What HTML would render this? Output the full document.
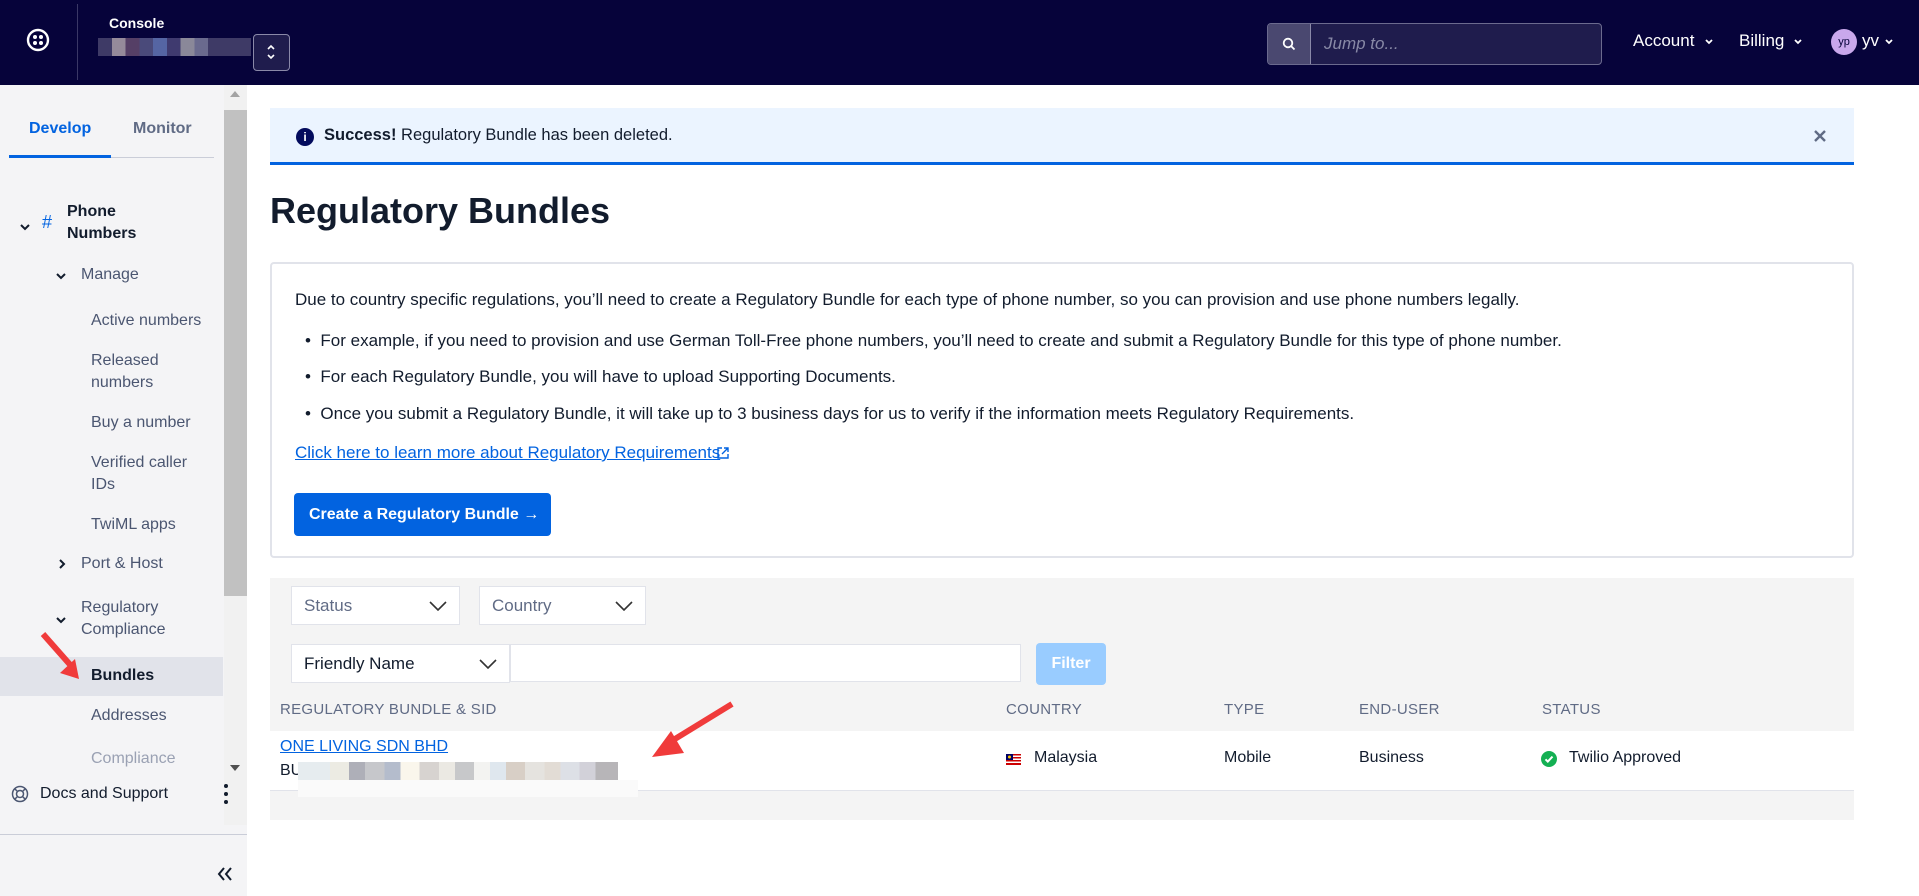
<!DOCTYPE html>
<html><head><meta charset="utf-8">
<style>
*{box-sizing:border-box;margin:0;padding:0}
body{width:1919px;height:896px;overflow:hidden;font-family:"Liberation Sans",sans-serif;background:#fff;position:relative;color:#121c2d}
.a{position:absolute;white-space:nowrap}
#hdr{position:absolute;left:0;top:0;width:1919px;height:85px;background:#06033a}
#side{position:absolute;left:0;top:85px;width:247px;height:811px;background:#f4f4f6}
.s{position:absolute;font-size:16px;color:#4b5671;line-height:22px}
.m{font-size:17px;color:#121c2d}
.th{position:absolute;top:701px;font-size:15px;color:#606b85;letter-spacing:.3px}
.td{position:absolute;top:749px;font-size:16px;color:#121c2d}
.sel{position:absolute;background:#fff;border:1px solid #e1e3ea;font-size:17px;color:#606b85;padding:0 12px;display:flex;align-items:center;justify-content:space-between}
</style></head><body>
<div id="hdr">
  <svg class="a" style="left:26px;top:28px" width="24" height="24" viewBox="0 0 24 24"><circle cx="12" cy="12" r="10" fill="none" stroke="#fff" stroke-width="2.4"/><circle cx="9" cy="9" r="2" fill="#fff"/><circle cx="15" cy="9" r="2" fill="#fff"/><circle cx="9" cy="15" r="2" fill="#fff"/><circle cx="15" cy="15" r="2" fill="#fff"/></svg>
  <div class="a" style="left:77px;top:4px;width:1px;height:76px;background:#3a3866"></div>
  <div class="a" style="left:109px;top:15px;font-size:14px;font-weight:bold;color:#fff">Console</div>
  <div class="a" style="left:98px;top:38px;width:153px;height:18px;background:linear-gradient(90deg,#3e3a66 0 9%,#958a9a 9% 18%,#553f66 18% 27%,#4a4a7a 27% 36%,#5565a3 36% 45%,#3f3a6f 45% 54%,#8a8899 54% 63%,#6a6a8e 63% 72%,#3e3a66 72%)"></div>
  <div class="a" style="left:253px;top:34px;width:37px;height:37px;border:1px solid #8a89a8;border-radius:4px;background:#1f1c4d"></div>
  <svg class="a" style="left:266px;top:43px" width="10" height="18" viewBox="0 0 10 18"><path d="M2 6l3-3 3 3M2 12l3 3 3-3" fill="none" stroke="#fff" stroke-width="1.6"/></svg>
  <div class="a" style="left:1267px;top:23px;width:335px;height:42px;border:1px solid #6b6a8e;border-radius:4px;background:#1f1c4d;overflow:hidden">
    <div class="a" style="left:0;top:0;width:43px;height:40px;background:#4a4870;border-right:1px solid #8a89a8"></div>
    <svg class="a" style="left:14px;top:13px" width="14" height="14" viewBox="0 0 14 14"><circle cx="6" cy="6" r="4.3" fill="none" stroke="#fff" stroke-width="1.8"/><path d="M9 9l3.5 3.5" stroke="#fff" stroke-width="1.8"/></svg>
    <div class="a" style="left:56px;top:10px;font-size:17px;font-style:italic;color:#8889a6">Jump to...</div>
  </div>
  <div class="a" style="left:1633px;top:31px;font-size:17px;color:#fff">Account</div>
  <svg class="a" style="left:1704px;top:38px" width="10" height="8" viewBox="0 0 10 8"><path d="M2 2l3 3 3-3" fill="none" stroke="#fff" stroke-width="1.8"/></svg>
  <div class="a" style="left:1739px;top:31px;font-size:17px;color:#fff">Billing</div>
  <svg class="a" style="left:1793px;top:38px" width="10" height="8" viewBox="0 0 10 8"><path d="M2 2l3 3 3-3" fill="none" stroke="#fff" stroke-width="1.8"/></svg>
  <div class="a" style="left:1831px;top:29px;width:26px;height:26px;border-radius:13px;background:#c9a8ec;color:#06033a;font-size:11px;text-align:center;line-height:26px">yp</div>
  <div class="a" style="left:1862px;top:31px;font-size:17px;color:#fff">yv</div>
  <svg class="a" style="left:1884px;top:38px" width="10" height="8" viewBox="0 0 10 8"><path d="M2 2l3 3 3-3" fill="none" stroke="#fff" stroke-width="1.8"/></svg>
</div>

<div id="side">
  <div class="a" style="left:224px;top:0;width:23px;height:740px;background:#f1f1f1"></div>
  <div class="a" style="left:224px;top:25px;width:23px;height:486px;background:#c1c1c1"></div>
  <div class="a" style="left:230px;top:6px;width:0;height:0;border-left:5px solid transparent;border-right:5px solid transparent;border-bottom:6px solid #a3a3a3"></div>
  <div class="a" style="left:230px;top:680px;width:0;height:0;border-left:5px solid transparent;border-right:5px solid transparent;border-top:6px solid #505050"></div>
  <div class="a" style="left:29px;top:35px;font-size:16px;font-weight:bold;color:#0263e0">Develop</div>
  <div class="a" style="left:133px;top:35px;font-size:16px;font-weight:bold;color:#606b85">Monitor</div>
  <div class="a" style="left:9px;top:72px;width:205px;height:1px;background:#cacdd8"></div>
  <div class="a" style="left:9px;top:70px;width:102px;height:3px;background:#0263e0"></div>
  <svg class="a" style="left:19px;top:137px" width="12" height="10" viewBox="0 0 12 10"><path d="M2 3l4 4 4-4" fill="none" stroke="#121c2d" stroke-width="2"/></svg>
  <div class="a" style="left:42px;top:127px;font-size:18px;color:#0263e0">#</div>
  <div class="s" style="left:67px;top:116px;font-weight:bold;color:#121c2d">Phone<br>Numbers</div>
  <svg class="a" style="left:55px;top:186px" width="12" height="10" viewBox="0 0 12 10"><path d="M2 3l4 4 4-4" fill="none" stroke="#121c2d" stroke-width="2"/></svg>
  <div class="s" style="left:81px;top:179px">Manage</div>
  <div class="s" style="left:91px;top:225px">Active numbers</div>
  <div class="s" style="left:91px;top:265px">Released<br>numbers</div>
  <div class="s" style="left:91px;top:327px">Buy a number</div>
  <div class="s" style="left:91px;top:367px">Verified caller<br>IDs</div>
  <div class="s" style="left:91px;top:429px">TwiML apps</div>
  <svg class="a" style="left:57px;top:473px" width="10" height="12" viewBox="0 0 10 12"><path d="M3 2l4 4-4 4" fill="none" stroke="#121c2d" stroke-width="2"/></svg>
  <div class="s" style="left:81px;top:468px">Port &amp; Host</div>
  <svg class="a" style="left:55px;top:530px" width="12" height="10" viewBox="0 0 12 10"><path d="M2 3l4 4 4-4" fill="none" stroke="#121c2d" stroke-width="2"/></svg>
  <div class="s" style="left:81px;top:512px">Regulatory<br>Compliance</div>
  <div class="a" style="left:0;top:572px;width:223px;height:39px;background:#e1e3ea"></div>
  <div class="s" style="left:91px;top:580px;font-weight:bold;color:#121c2d">Bundles</div>
  <div class="s" style="left:91px;top:620px">Addresses</div>
  <div class="s" style="left:91px;top:660px;color:#9aa1b3;line-height:28px">Compliance<br>report</div>
  <div class="a" style="left:0;top:694px;width:224px;height:50px;background:#f4f4f6"></div>
  <svg class="a" style="left:11px;top:700px" width="18" height="18" viewBox="0 0 18 18"><circle cx="9" cy="9" r="7.5" fill="none" stroke="#4b5671" stroke-width="1.5"/><circle cx="9" cy="9" r="3.5" fill="none" stroke="#4b5671" stroke-width="1.5"/><path d="M3.5 3.5l3 3M14.5 3.5l-3 3M3.5 14.5l3-3M14.5 14.5l-3-3" stroke="#4b5671" stroke-width="1.5"/></svg>
  <div class="s" style="left:40px;top:698px;color:#121c2d">Docs and Support</div>
  <svg class="a" style="left:222px;top:698px" width="8" height="22" viewBox="0 0 8 22"><circle cx="4" cy="3" r="2" fill="#121c2d"/><circle cx="4" cy="11" r="2" fill="#121c2d"/><circle cx="4" cy="19" r="2" fill="#121c2d"/></svg>
  <div class="a" style="left:0;top:749px;width:247px;height:1px;background:#cacdd8"></div>
  <svg class="a" style="left:216px;top:781px" width="18" height="16" viewBox="0 0 18 16"><path d="M8 2L3 8l5 6M15 2l-5 6 5 6" fill="none" stroke="#121c2d" stroke-width="2"/></svg>
</div>
<svg class="a" style="left:30px;top:625px" width="60" height="60" viewBox="0 0 60 60"><path d="M13 9l30 34" stroke="#f03b3b" stroke-width="6"/><path d="M30 48l19 6-4-20z" fill="#f03b3b"/></svg>

<div class="a" style="left:270px;top:108px;width:1584px;height:57px;background:#ebf4ff;border-bottom:3px solid #0263e0"></div>
<div class="a" style="left:296px;top:128px;width:18px;height:18px;border-radius:9px;background:#030b5d;color:#fff;font-size:12px;font-weight:bold;text-align:center;line-height:18px">i</div>
<div class="a" style="left:324px;top:126px;font-size:16.5px"><b>Success!</b> Regulatory Bundle has been deleted.</div>
<svg class="a" style="left:1813px;top:129px" width="14" height="14" viewBox="0 0 14 14"><path d="M2 2l10 10M12 2L2 12" stroke="#606b85" stroke-width="2.4"/></svg>

<div class="a" style="left:270px;top:190px;font-size:36px;font-weight:bold;color:#121c2d">Regulatory Bundles</div>

<div class="a" style="left:270px;top:262px;width:1584px;height:296px;border:2px solid #e1e3ea;border-radius:4px"></div>
<div class="a m" style="left:295px;top:290px">Due to country specific regulations, you’ll need to create a Regulatory Bundle for each type of phone number, so you can provision and use phone numbers legally.</div>
<div class="a m" style="left:305px;top:331px">•&nbsp;&nbsp;For example, if you need to provision and use German Toll-Free phone numbers, you’ll need to create and submit a Regulatory Bundle for this type of phone number.</div>
<div class="a m" style="left:305px;top:367px">•&nbsp;&nbsp;For each Regulatory Bundle, you will have to upload Supporting Documents.</div>
<div class="a m" style="left:305px;top:404px">•&nbsp;&nbsp;Once you submit a Regulatory Bundle, it will take up to 3 business days for us to verify if the information meets Regulatory Requirements.</div>
<div class="a m" style="left:295px;top:443px;color:#0263e0;text-decoration:underline">Click here to learn more about Regulatory Requirements</div>
<svg class="a" style="left:716px;top:446px" width="14" height="14" viewBox="0 0 14 14"><path d="M6 2H2v10h10V8M8 2h4v4M12 2L6 8" fill="none" stroke="#0263e0" stroke-width="1.4"/></svg>
<div class="a" style="left:294px;top:493px;width:257px;height:43px;background:#0263e0;border-radius:4px;color:#fff;font-size:16px;font-weight:bold;line-height:43px;padding-left:15px">Create a Regulatory Bundle &rarr;</div>

<div class="a" style="left:270px;top:578px;width:1584px;height:242px;background:#f4f4f4"></div>
<div class="sel" style="left:291px;top:586px;width:169px;height:39px">Status <svg width="18" height="10" viewBox="0 0 18 10"><path d="M1 1l8 8 8-8" fill="none" stroke="#333" stroke-width="1.6"/></svg></div>
<div class="sel" style="left:479px;top:586px;width:167px;height:39px">Country <svg width="18" height="10" viewBox="0 0 18 10"><path d="M1 1l8 8 8-8" fill="none" stroke="#333" stroke-width="1.6"/></svg></div>
<div class="sel" style="left:291px;top:644px;width:219px;height:39px;color:#121c2d">Friendly Name <svg width="18" height="10" viewBox="0 0 18 10"><path d="M1 1l8 8 8-8" fill="none" stroke="#333" stroke-width="1.6"/></svg></div>
<div class="a" style="left:510px;top:644px;width:511px;height:38px;background:#fff;border:1px solid #e1e3ea"></div>
<div class="a" style="left:1036px;top:643px;width:70px;height:42px;background:#99ccff;border-radius:4px;color:#fff;font-size:16px;font-weight:bold;text-align:center;line-height:42px">Filter</div>
<div class="th" style="left:280px">REGULATORY BUNDLE &amp; SID</div>
<div class="th" style="left:1006px">COUNTRY</div>
<div class="th" style="left:1224px">TYPE</div>
<div class="th" style="left:1359px">END-USER</div>
<div class="th" style="left:1542px">STATUS</div>
<div class="a" style="left:270px;top:731px;width:1584px;height:60px;background:#fff;border-bottom:1px solid #e1e3ea"></div>
<div class="a" style="left:280px;top:738px;font-size:16px;color:#0263e0;text-decoration:underline">ONE LIVING SDN BHD</div>
<div class="a" style="left:280px;top:762px;font-size:16px">BU</div>
<div class="a" style="left:298px;top:762px;width:320px;height:18px;background:linear-gradient(90deg,#e6ecef 0 10%,#ecebe3 10% 16%,#aeafb8 16% 21%,#c6c7cb 21% 27%,#b4bccc 27% 32%,#faf6ec 32% 38%,#d7d3d0 38% 44%,#ebe9e3 44% 49%,#c7c8ca 49% 55%,#f3f3f1 55% 60%,#dfe7ee 60% 65%,#d8cfc6 65% 71%,#e5e3df 71% 77%,#e2dcd5 77% 82%,#dde0e6 82% 88%,#d2d1d9 88% 93%,#b7b5b8 93%)"></div>
<div class="a" style="left:298px;top:780px;width:340px;height:17px;background:#fafafa"></div>
<svg class="a" style="left:1006px;top:754px" width="15" height="11" viewBox="0 0 15 11"><rect width="15" height="11" fill="#cc0001"/><rect y="1.5" width="15" height="1.5" fill="#fff"/><rect y="4.5" width="15" height="1.5" fill="#fff"/><rect y="7.5" width="15" height="1.5" fill="#fff"/><rect width="7" height="6" fill="#010066"/><circle cx="3.5" cy="3" r="1.5" fill="#fc0"/></svg>
<div class="td" style="left:1034px">Malaysia</div>
<div class="td" style="left:1224px">Mobile</div>
<div class="td" style="left:1359px">Business</div>
<svg class="a" style="left:1541px;top:751px" width="16" height="16" viewBox="0 0 16 16"><circle cx="8" cy="8" r="8" fill="#14b053"/><path d="M4.5 8.3l2.3 2.3 4.7-5" fill="none" stroke="#fff" stroke-width="2"/></svg>
<div class="td" style="left:1569px">Twilio Approved</div>
<svg class="a" style="left:640px;top:695px" width="100" height="70" viewBox="0 0 100 70"><path d="M92 9L30 47" stroke="#f03b3b" stroke-width="6"/><path d="M12 62l32-4-13-22z" fill="#f03b3b"/></svg>
</body></html>
